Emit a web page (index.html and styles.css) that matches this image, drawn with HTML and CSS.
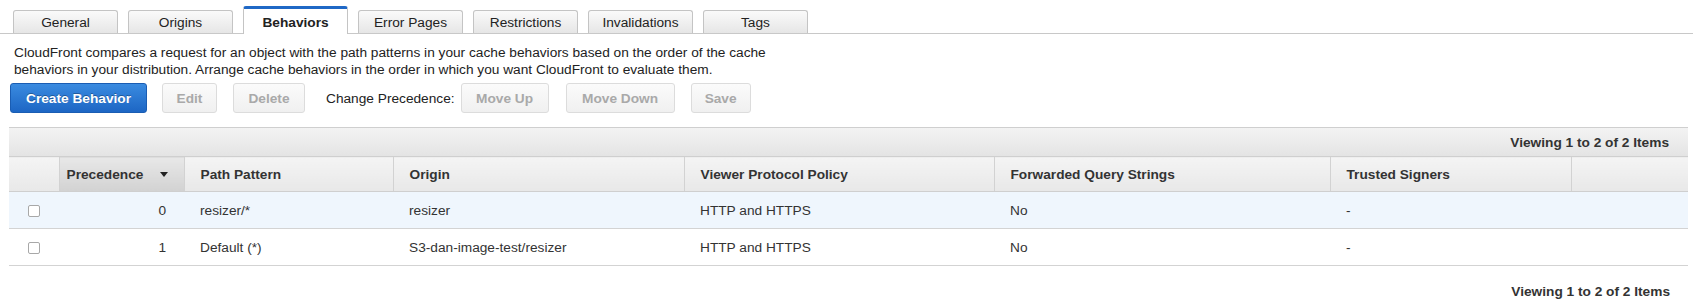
FILE: index.html
```html
<!DOCTYPE html>
<html lang="en">
<head>
    <meta charset="UTF-8">
    <title>CloudFront Distribution - Behaviors</title>
    <link rel="stylesheet" href="styles.css">
</head>
<body>
    <div class="tabs">
        <div class="tab">General</div>
        <div class="tab">Origins</div>
        <div class="tab active">Behaviors</div>
        <div class="tab">Error Pages</div>
        <div class="tab">Restrictions</div>
        <div class="tab">Invalidations</div>
        <div class="tab">Tags</div>
    </div>

    <p class="intro">CloudFront compares a request for an object with the path patterns in your cache behaviors based on the order of the cache<br>behaviors in your distribution. Arrange cache behaviors in the order in which you want CloudFront to evaluate them.</p>

    <div class="toolbar">
        <button class="btn primary create-btn">Create Behavior</button>
        <button class="btn edit-btn" disabled>Edit</button>
        <button class="btn delete-btn" disabled>Delete</button>
        <span class="toolbar-label">Change Precedence:</span>
        <button class="btn up-btn" disabled>Move Up</button>
        <button class="btn down-btn" disabled>Move Down</button>
        <button class="btn save-btn" disabled>Save</button>
    </div>

    <div class="grid">
        <div class="grid-top">Viewing 1 to 2 of 2 Items</div>
        <table>
            <colgroup>
                <col class="c-check">
                <col class="c-prec">
                <col class="c-path">
                <col class="c-origin">
                <col class="c-viewer">
                <col class="c-query">
                <col class="c-signers">
                <col>
            </colgroup>
            <thead>
                <tr>
                    <th></th>
                    <th class="sorted">Precedence <span class="sort-arrow"></span></th>
                    <th>Path Pattern</th>
                    <th>Origin</th>
                    <th>Viewer Protocol Policy</th>
                    <th>Forwarded Query Strings</th>
                    <th>Trusted Signers</th>
                    <th></th>
                </tr>
            </thead>
            <tbody>
                <tr class="selected">
                    <td class="check"><span class="box"></span></td>
                    <td class="num">0</td>
                    <td>resizer/*</td>
                    <td>resizer</td>
                    <td>HTTP and HTTPS</td>
                    <td>No</td>
                    <td>-</td>
                    <td></td>
                </tr>
                <tr>
                    <td class="check"><span class="box"></span></td>
                    <td class="num">1</td>
                    <td>Default (*)</td>
                    <td>S3-dan-image-test/resizer</td>
                    <td>HTTP and HTTPS</td>
                    <td>No</td>
                    <td>-</td>
                    <td></td>
                </tr>
            </tbody>
        </table>
        <div class="grid-bottom">Viewing 1 to 2 of 2 Items</div>
    </div>
</body>
</html>
```

FILE: styles.css
```css
body {
    margin: 0;
    font-family: 'Liberation Sans', Arial, sans-serif;
    font-size: 13.7px;
    color: #333;
    background: white;
}

.tabs {
    display: flex;
    align-items: flex-end;
    gap: 10px;
    height: 33px;
    padding-left: 13px;
    border-bottom: 1px solid #c8c8c8;
}

.tab {
    width: 103px;
    height: 22px;
    line-height: 23px;
    text-align: center;
    color: #222;
    background: linear-gradient(#fafafa, #e6e6e6);
    border: 1px solid #c4c4c4;
    border-bottom: none;
    border-radius: 3px 3px 0 0;
}

.tab.active {
    height: 24px;
    line-height: 27px;
    padding-bottom: 1px;
    margin-bottom: -1px;
    font-weight: bold;
    background: white;
    border-top: 3px solid #1f68c6;
}

.intro {
    margin: 10px 0 0 14px;
    line-height: 17px;
    color: #222;
}

.toolbar {
    display: flex;
    align-items: center;
    margin: 5px 0 0 10px;
    height: 30px;
}

.btn {
    height: 30px;
    font-family: inherit;
    font-size: 13.7px;
    font-weight: bold;
    border-radius: 3px;
    border: 1px solid #dcdcdc;
    background: linear-gradient(#fbfbfb, #f0f0f0);
    color: #a9a9a9;
    padding: 0;
}

.btn.primary {
    color: white;
    border: 1px solid #1a5db3;
    background: linear-gradient(#3a8be0, #1d66c4);
    text-shadow: 0 -1px 0 rgba(0,0,0,0.3);
}

.create-btn { width: 137px; }
.edit-btn { width: 55px; margin-left: 15px; }
.delete-btn { width: 72px; margin-left: 16px; }
.up-btn { width: 88px; margin-left: 6px; }
.down-btn { width: 109px; margin-left: 17px; }
.save-btn { width: 60px; margin-left: 16px; }

.toolbar-label {
    margin-left: 21px;
    color: #222;
}

.grid {
    margin: 14px 5px 0 9px;
}

.grid-top {
    height: 28px;
    line-height: 29px;
    border-top: 1px solid #cfcfcf;
    background: linear-gradient(#f3f3f3, #e4e4e4);
    text-align: right;
    padding-right: 19px;
    font-weight: bold;
    color: #333;
}

table {
    width: 100%;
    border-collapse: collapse;
    table-layout: fixed;
}

.c-check { width: 50px; }
.c-prec { width: 125px; }
.c-path { width: 209px; }
.c-origin { width: 291px; }
.c-viewer { width: 310px; }
.c-query { width: 336px; }
.c-signers { width: 241px; }

th {
    height: 34px;
    padding: 0 16px;
    text-align: left;
    font-weight: bold;
    color: #333;
    background: linear-gradient(#f4f4f4, #e8e8e8);
    border-top: 1px solid #cfcfcf;
    border-bottom: 1px solid #cfcfcf;
    border-left: 1px solid #d2d2d2;
}

th:first-child {
    border-left: none;
}

th.sorted {
    padding-left: 7px;
    background: linear-gradient(#e8e8e8, #d2d2d2);
    white-space: nowrap;
}

.sort-arrow {
    display: inline-block;
    width: 0;
    height: 0;
    margin-left: 13px;
    vertical-align: middle;
    border-left: 4px solid transparent;
    border-right: 4px solid transparent;
    border-top: 5px solid #222;
}

td {
    height: 36px;
    padding: 0 16px;
    border-bottom: 1px solid #d3d3d3;
    color: #333;
}

tr.selected td {
    background: #eff6fd;
}

td.num {
    text-align: right;
    padding-right: 18px;
}

td.check {
    padding: 0;
    text-align: center;
}

.box {
    display: inline-block;
    width: 10px;
    height: 10px;
    border: 1px solid #a8a8a8;
    border-radius: 2px;
    background: white;
    vertical-align: middle;
}

.grid-bottom {
    margin-top: 18px;
    text-align: right;
    padding-right: 18px;
    font-weight: bold;
    color: #333;
}
```
